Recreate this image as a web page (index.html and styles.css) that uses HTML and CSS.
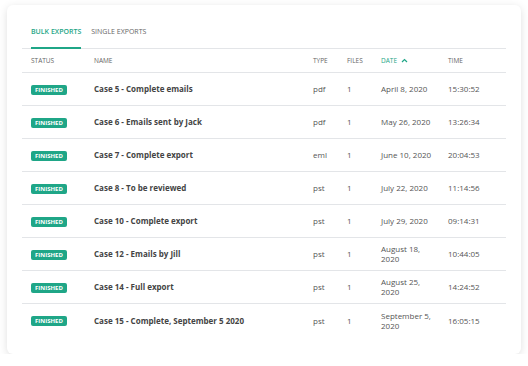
FILE: index.html
```html
<!DOCTYPE html>
<html lang="en">
<head>
  <meta charset="UTF-8" />
  <title>Exports</title>
  <link rel="stylesheet" href="styles.css">
</head>
<body>
  <div class="card">
    <div class="tabs">
      <span class="tab active">Bulk exports</span>
      <span class="tab">Single exports</span>
    </div>

    <table class="exports">
      <colgroup>
        <col class="c-status">
        <col class="c-name">
        <col class="c-type">
        <col class="c-files">
        <col class="c-date">
        <col class="c-time">
      </colgroup>
      <thead>
        <tr>
          <th>Status</th>
          <th>Name</th>
          <th>Type</th>
          <th>Files</th>
          <th class="sorted">Date
            <svg class="chev" width="7" height="5" viewBox="0 0 7 5"><path d="M1 4 L3.5 1.5 L6 4" fill="none" stroke="currentColor" stroke-width="1.2"/></svg>
          </th>
          <th>Time</th>
        </tr>
      </thead>
      <tbody>
        <tr>
          <td><span class="badge">Finished</span></td>
          <td class="name">Case 5 - Complete emails</td>
          <td>pdf</td><td>1</td><td>April 8, 2020</td><td>15:30:52</td>
        </tr>
        <tr>
          <td><span class="badge">Finished</span></td>
          <td class="name">Case 6 - Emails sent by Jack</td>
          <td>pdf</td><td>1</td><td>May 26, 2020</td><td>13:26:34</td>
        </tr>
        <tr>
          <td><span class="badge">Finished</span></td>
          <td class="name">Case 7 - Complete export</td>
          <td>eml</td><td>1</td><td>June 10, 2020</td><td>20:04:53</td>
        </tr>
        <tr>
          <td><span class="badge">Finished</span></td>
          <td class="name">Case 8 - To be reviewed</td>
          <td>pst</td><td>1</td><td>July 22, 2020</td><td>11:14:56</td>
        </tr>
        <tr>
          <td><span class="badge">Finished</span></td>
          <td class="name">Case 10 - Complete export</td>
          <td>pst</td><td>1</td><td>July 29, 2020</td><td>09:14:31</td>
        </tr>
        <tr>
          <td><span class="badge">Finished</span></td>
          <td class="name">Case 12 - Emails by Jill</td>
          <td>pst</td><td>1</td><td>August 18, 2020</td><td>10:44:05</td>
        </tr>
        <tr>
          <td><span class="badge">Finished</span></td>
          <td class="name">Case 14 - Full export</td>
          <td>pst</td><td>1</td><td>August 25, 2020</td><td>14:24:52</td>
        </tr>
        <tr>
          <td><span class="badge">Finished</span></td>
          <td class="name">Case 15 - Complete, September 5 2020</td>
          <td>pst</td><td>1</td><td>September 5, 2020</td><td>16:05:15</td>
        </tr>
      </tbody>
    </table>
  </div>
</body>
</html>
```

FILE: styles.css
```css
* {
  box-sizing: border-box;
  margin: 0;
  padding: 0;
  font-family: 'Open Sans', sans-serif;
}

body {
  background: #fff;
  color: #555;
}

.card {
  margin: 5px 7px 0;
  height: 349px;
  padding: 22px 15px 0;
  background: #fff;
  border-radius: 6px;
  box-shadow: 0 2px 9px rgba(0, 0, 0, 0.13);
}

.tabs {
  display: flex;
  gap: 10px;
  padding-left: 9px;
  border-bottom: 1px solid #e3e5e8;
}

.tab {
  font-size: 7px;
  line-height: 10px;
  font-weight: 400;
  text-transform: uppercase;
  color: #666;
  padding-bottom: 10px;
  border-bottom: 2px solid transparent;
  margin-bottom: -1px;
}

.tab.active {
  font-weight: 600;
  color: #1fa687;
  border-bottom-color: #1fa687;
}

.exports {
  width: 100%;
  table-layout: fixed;
  border-collapse: separate;
  border-spacing: 0;
}

.c-status { width: 63px; }
.c-type { width: 34px; }
.c-files { width: 34px; }
.c-date { width: 67px; }
.c-time { width: 67px; }

.exports th {
  height: 24px;
  padding: 0 0 0 9px;
  font-size: 6.5px;
  font-weight: 400;
  text-align: left;
  text-transform: uppercase;
  color: #666;
  border-bottom: 1px solid #e3e5e8;
}

.exports th.sorted {
  color: #1fa687;
}

.chev {
  margin-left: 2px;
  vertical-align: 0;
}

.exports td {
  height: 33px;
  padding: 0 0 0 9px;
  font-size: 8px;
  line-height: 10px;
  vertical-align: middle;
  border-bottom: 1px solid #e3e5e8;
}

.exports tbody tr:last-child td {
  border-bottom: none;
}

.exports td.name {
  font-size: 8px;
  font-weight: 700;
  color: #444;
}

.badge {
  display: inline-block;
  height: 10px;
  padding: 0 4px;
  font-size: 6px;
  line-height: 10px;
  font-weight: 700;
  text-transform: uppercase;
  color: #fff;
  background: #1fa687;
  border-radius: 2px;
}
```
